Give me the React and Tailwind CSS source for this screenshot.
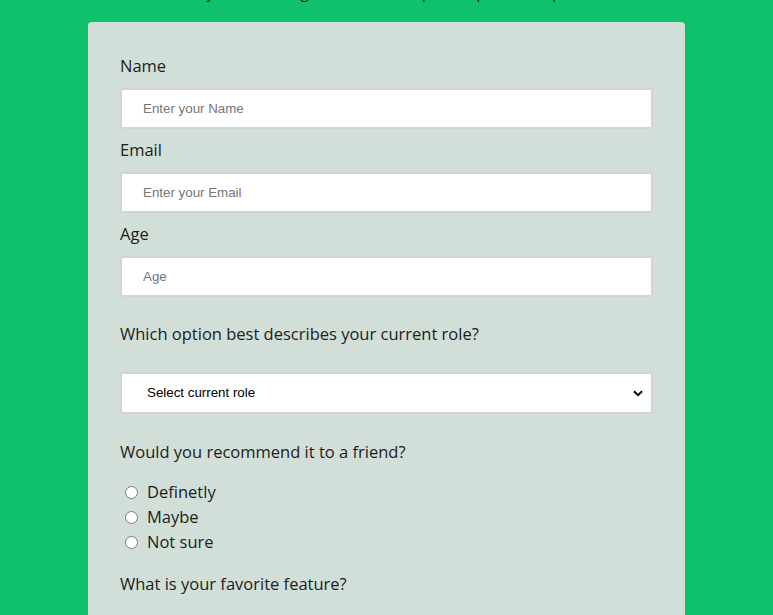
import React from 'react';

const labelFont = { fontFamily: '"Open Sans", "DejaVu Sans", sans-serif' };

const Field = ({ label, placeholder, type = 'text' }) => (
    <div className="mb-[9px]">
        <label className="block h-6 leading-6 mb-[10px] text-[16.5px] text-[#1d1d1d]">{label}</label>
        <input
            type={type}
            placeholder={placeholder}
            className="block w-full h-[41px] px-[21px] bg-white border-2 border-[#d3d3d3] rounded-[3px] text-[13.33px] text-black placeholder:text-[#767676] outline-none"
            style={{ fontFamily: '"Liberation Sans", Arial, sans-serif' }}
        />
    </div>
);

const Radio = ({ label }) => (
    <label className="flex items-center h-[25px] text-[16.5px] text-[#1d1d1d]">
        <input type="radio" name="recommend" className="w-[13px] h-[13px] ml-[5px] mr-[9px] accent-[#767676]" />
        {label}
    </label>
);

const App = () => {
    return (
        <div className="min-h-screen bg-[#0fc16b] overflow-hidden" style={labelFont}>
            <p className="text-center text-[16px] leading-5 -mt-[18px] h-[40px] text-[#1d1d1d]">
                Thank you for taking the time to help us improve the platform
            </p>
            <form className="w-[597px] mx-auto bg-[#d1dfd8] rounded-[4px] px-8 pt-8 pb-10">
                <Field label="Name" placeholder="Enter your Name" />
                <Field label="Email" placeholder="Enter your Email" type="email" />
                <Field label="Age" placeholder="Age" type="number" />

                <p className="h-6 leading-6 mt-[25px] mb-[26px] text-[16.5px] text-[#1d1d1d]">
                    Which option best describes your current role?
                </p>
                <div className="relative">
                    <select
                        className="block w-full h-[42px] pl-[25px] pr-8 bg-white border-2 border-[#d3d3d3] rounded-[3px] text-[13.33px] text-black appearance-none outline-none"
                        style={{ fontFamily: '"Liberation Sans", Arial, sans-serif' }}
                        defaultValue=""
                    >
                        <option value="" disabled>Select current role</option>
                        <option>Student</option>
                        <option>Full Time Job</option>
                        <option>Full Time Learner</option>
                        <option>Prefer not to say</option>
                        <option>Other</option>
                    </select>
                    <svg className="absolute right-[10px] top-[18px] w-[10px] h-[7px] pointer-events-none" viewBox="0 0 10 7">
                        <path d="M1 1.2 L5 5.2 L9 1.2" fill="none" stroke="#000" strokeWidth="2" />
                    </svg>
                </div>

                <p className="h-6 leading-6 mt-[26px] mb-4 text-[16.5px] text-[#1d1d1d]">
                    Would you recommend it to a friend?
                </p>
                <Radio label="Definetly" />
                <Radio label="Maybe" />
                <Radio label="Not sure" />

                <p className="h-6 leading-6 mt-[17px] text-[16.5px] text-[#1d1d1d]">
                    What is your favorite feature?
                </p>
                <div className="h-24"></div>
            </form>
        </div>
    );
};

export default App;
